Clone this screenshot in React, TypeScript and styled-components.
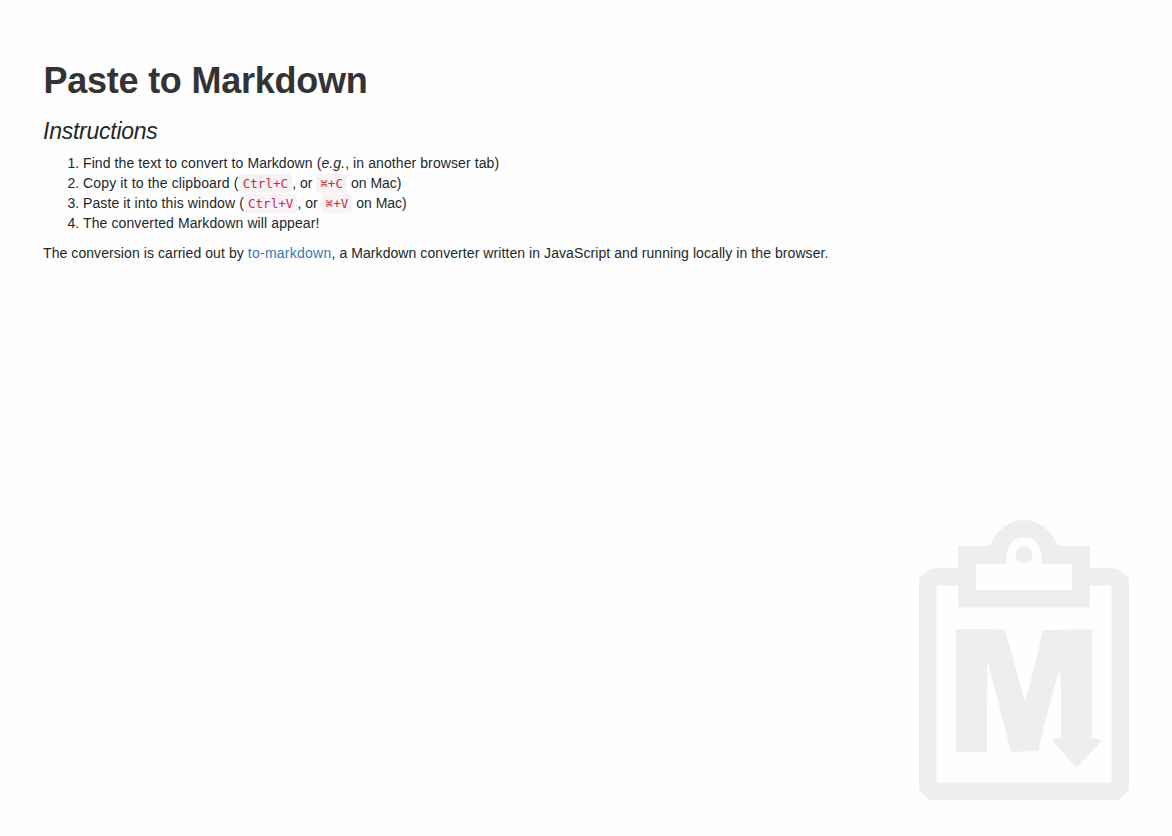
import React from "react";
import styled, { createGlobalStyle } from "styled-components";

const GlobalStyle = createGlobalStyle`
  *, *::before, *::after { box-sizing: border-box; }
  body {
    margin: 0;
    background: #fefefe;
    color: #222829;
    font: 14px/20px "Liberation Sans", Arial, sans-serif;
  }
`;

const Page = styled.main`
  display: flex;
  flex-direction: column;
  height: 836px;
  padding: 61px 43px 36px;
`;

const Title = styled.h1`
  margin: 0;
  padding-left: 0.5px;
  font-size: 36px;
  line-height: 40px;
  font-weight: 700;
  letter-spacing: -0.24px;
  color: #333;
`;

const Subtitle = styled.h2`
  margin: 18px 0 9px;
  font-size: 23px;
  line-height: 25px;
  font-weight: 400;
  font-style: italic;
  letter-spacing: -0.25px;
`;

const Steps = styled.ol`
  margin: 0 0 10px;
  padding: 0 0 0 40px;
`;

const Step = styled.li`
  height: 20px;
  white-space: nowrap;
`;

const Phrase = styled.span<{ $spacing: number }>`
  letter-spacing: ${(p) => p.$spacing}px;
`;

const Key = styled.code`
  padding: 2px 4px;
  border-radius: 4px;
  background: #f9f2f4;
  color: #c0304a;
  font: 12.6px/18px "DejaVu Sans Mono", monospace;
`;

const Note = styled.p`
  margin: 0;
  white-space: nowrap;
  letter-spacing: 0.075px;
`;

const Link = styled.a`
  color: #337ab7;
  text-decoration: none;
  letter-spacing: 0.25px;
`;

const Mark = styled.svg`
  display: block;
  width: 210px;
  height: 280px;
  margin-top: auto;
  align-self: flex-end;
  fill: #eee;
`;

export default function App() {
  return (
    <>
      <GlobalStyle />
      <Page>
        <Title>Paste to Markdown</Title>
        <Subtitle>Instructions</Subtitle>
        <Steps>
          <Step>
            <Phrase $spacing={0.09}>
              Find the text to convert to Markdown (<em>e.g.</em>, in another browser tab)
            </Phrase>
          </Step>
          <Step>
            <Phrase $spacing={0.15}>Copy it to the clipboard (</Phrase>
            <Key>Ctrl+C</Key>, or <Key>⌘+C</Key> on Mac)
          </Step>
          <Step>
            <Phrase $spacing={0.11}>Paste it into this window (</Phrase>
            <Key>Ctrl+V</Key>, or <Key>⌘+V</Key> on Mac)
          </Step>
          <Step>
            <Phrase $spacing={0.11}>The converted Markdown will appear!</Phrase>
          </Step>
        </Steps>
        <Note>
          The conversion is carried out by <Link href="#">to-markdown</Link>, a Markdown converter
          written in JavaScript and running locally in the browser.
        </Note>
        <Mark viewBox="0 0 210 280" aria-hidden="true">
          <path
            fillRule="evenodd"
            d="M0 58.5 8 51Q11 48.2 19 48.2H39.3V26H65Q71.5 25.8 72 23.5C77 12 89 0 105 0S133 12 138 23.5Q139 25.8 145 26H170.7V48.2H191Q199 48.2 202 51L210 58.5V269.5L199.5 280H10.5L0 269.5ZM17.5 65.7V262.4H192.5V65.7H170.7V87.5H39.3V65.7ZM57 43.7V70H153V43.7H122.3V35Q121 17.5 105 17.5T87.7 35V43.7Z"
          />
          <circle cx="105" cy="34.7" r="8.5" />
          <path d="M37 109.3H77Q85.5 109.5 86.7 112L105.6 180.6Q114 155 124 110L172.8 109.3V218.5L179 219Q183 219.5 182 221.5L157.6 248 134 221.5Q132 219.5 136 219L142 218.5V168Q141.5 155 140.4 151Q138 154 119.3 231L92 232 68.5 141Q68 165 68 232H37Z" />
        </Mark>
      </Page>
    </>
  );
}
